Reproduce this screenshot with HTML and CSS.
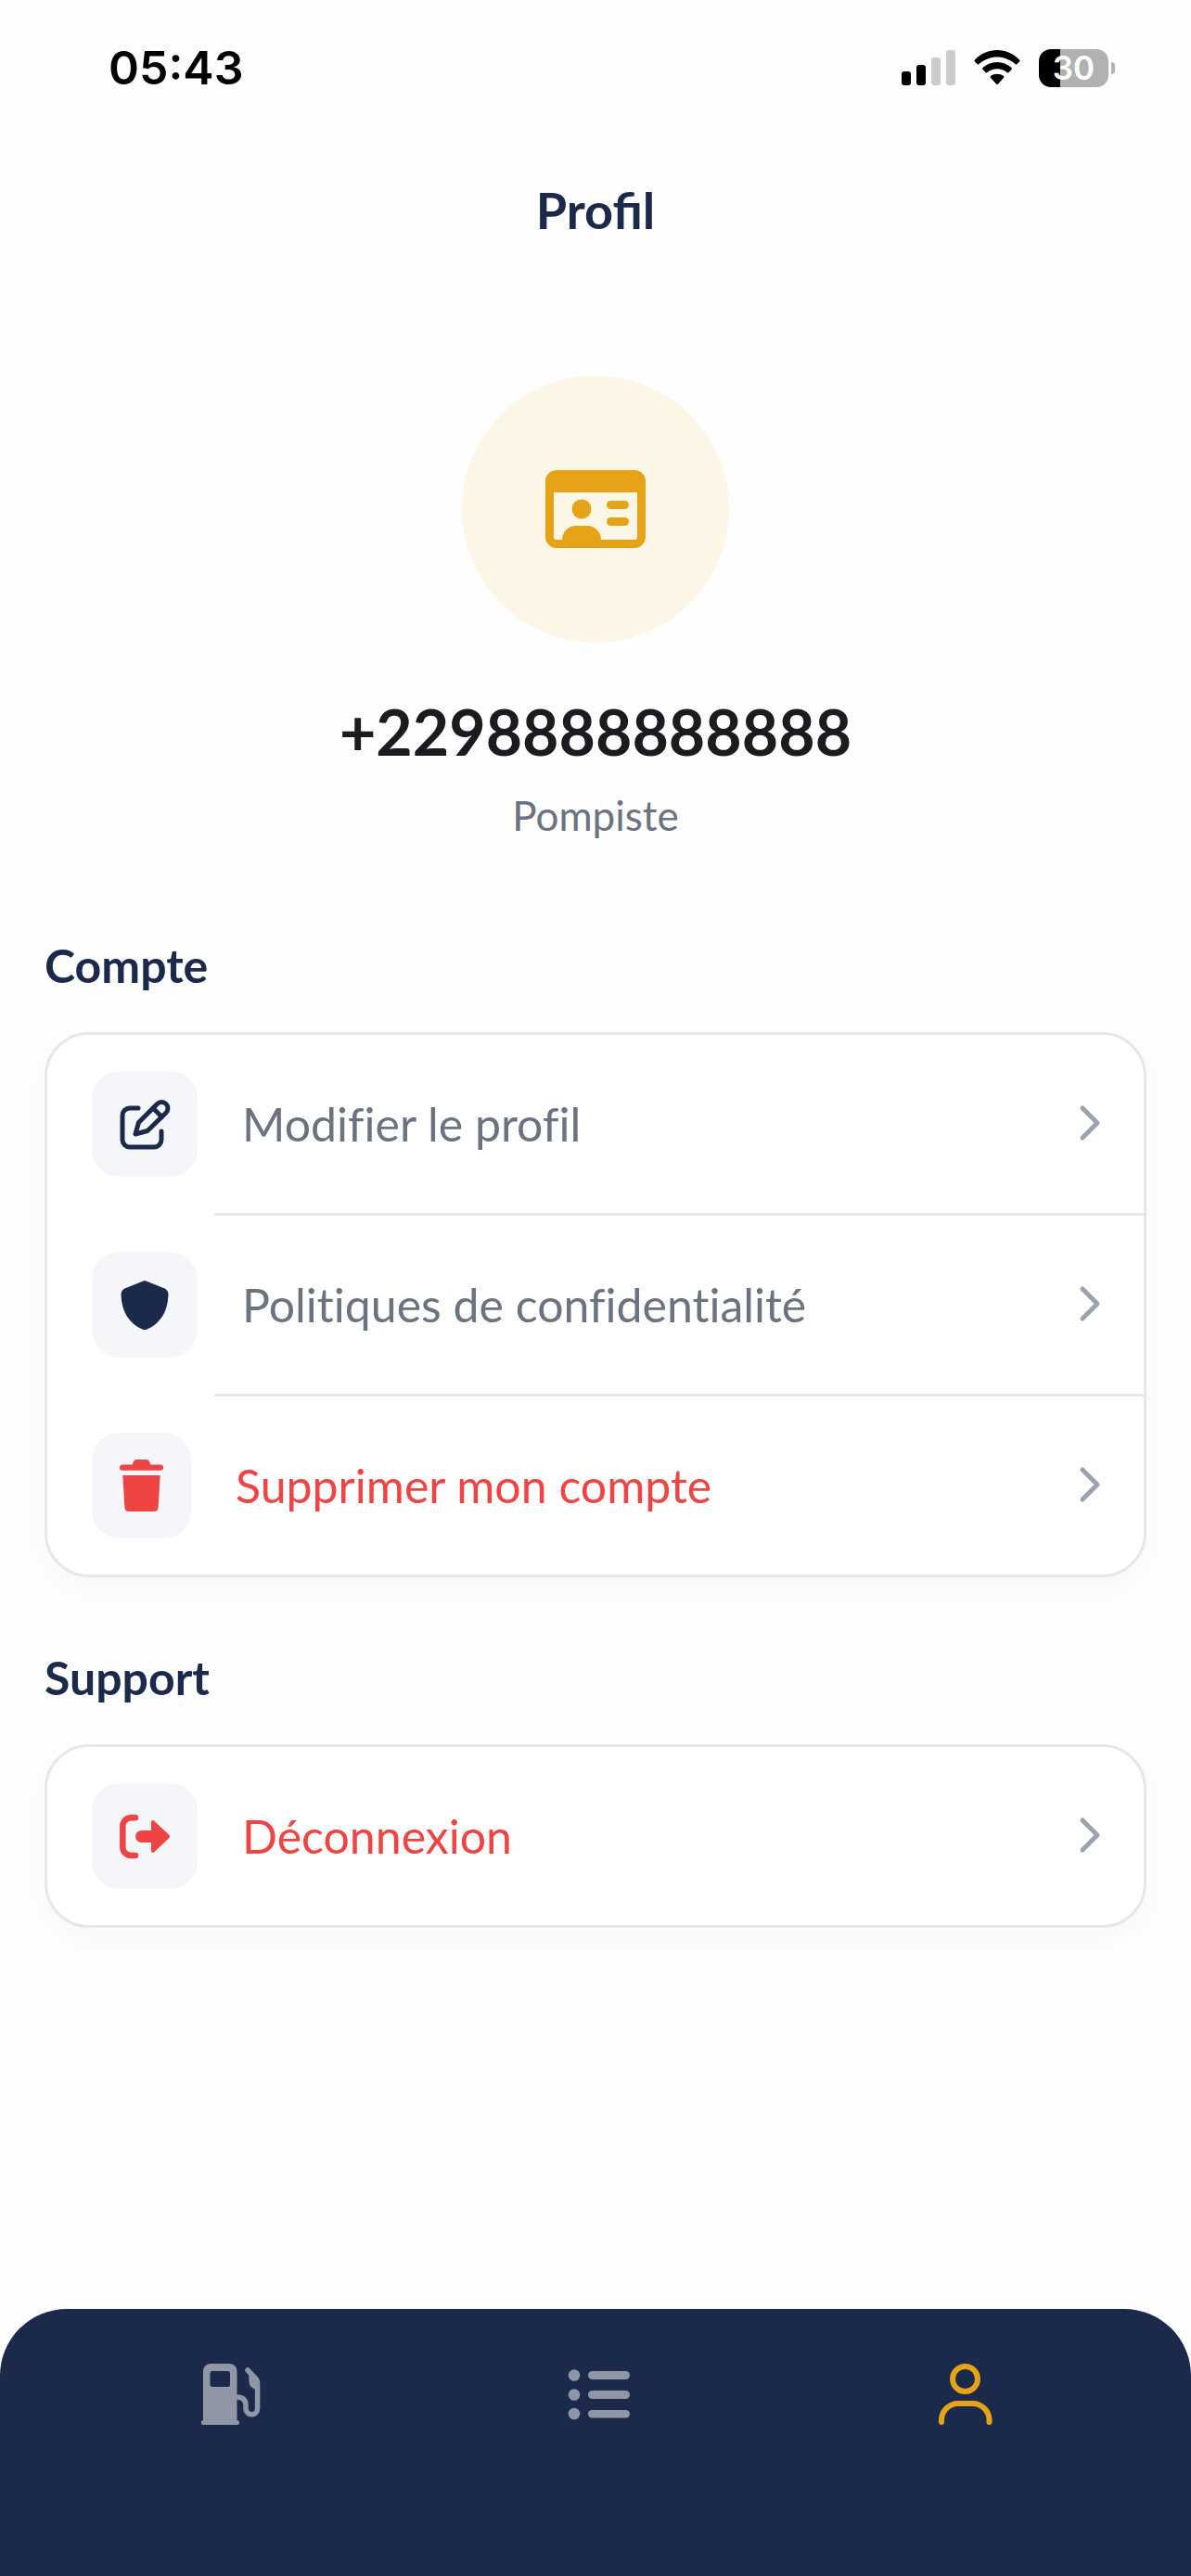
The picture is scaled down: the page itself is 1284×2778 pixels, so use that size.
FILE: index.html
```
<!DOCTYPE html>
<html lang="fr">
<head>
    <meta charset="UTF-8">
    <meta name="viewport" content="width=device-width, initial-scale=1.0">
    <title>Profil</title>
    <link rel="stylesheet" href="styles.css">
</head>
<body>
    <div class="status-bar">
        <span class="time">05:43</span>
        <div class="status-icons">
            <svg width="58" height="38" viewBox="0 0 58 38" aria-hidden="true">
                <rect x="0" y="23" width="10" height="15" rx="3"/>
                <rect x="16" y="16" width="10" height="22" rx="3"/>
                <rect x="32" y="8" width="10" height="30" rx="3" fill="#ccc"/>
                <rect x="48" y="0" width="10" height="38" rx="3" fill="#ccc"/>
            </svg>
            <svg width="50" height="38" viewBox="0 0 50 38" aria-hidden="true">
                <path d="M1 10.5C14-3.5 36-3.5 49 10.5Q50 11.500 49 12.500L46.500 15Q45.500 16 44.500 15C33 5 17 5 5.500 15Q4.500 16 3.500 15L1 12.500Q0 11.500 1 10.500Z"/>
                <path d="M9.500 19C18 11 32 11 40.500 19Q41.500 20 40.500 21L37.500 24Q36.500 25 35.500 24C29.500 19 20.500 19 14.500 24Q13.500 25 12.500 24L9.500 21Q8.500 20 9.500 19Z"/>
                <path d="M18 28C22 25 28 25 32 28Q33 29 32 30L26 36.500Q25 37.500 24 36.500L18 30Q17 29 18 28Z"/>
            </svg>
            <div class="battery"><span>30</span></div>
        </div>
    </div>

    <header class="header">
        <h1>Profil</h1>
    </header>

    <main>
        <section class="profile">
            <div class="avatar">
                <svg width="108" height="84" viewBox="0 0 108 84" aria-hidden="true">
                    <path fill-rule="evenodd" d="M12 0H96A12 12 0 0 1 108 12V72A12 12 0 0 1 96 84H12A12 12 0 0 1 0 72V12A12 12 0 0 1 12 0ZM9 24V72A3 3 0 0 0 12 75H18A15 15 0 0 1 33 60H45A15 15 0 0 1 60 75H96A3 3 0 0 0 99 72V24Z"/>
                    <circle cx="39" cy="42" r="10.500"/>
                    <rect x="66" y="33" width="24" height="9" rx="4.500"/>
                    <rect x="66" y="51" width="24" height="9" rx="4.500"/>
                </svg>
            </div>
            <p class="phone">+2298888888888</p>
            <p class="role">Pompiste</p>
        </section>

        <section class="group">
            <h2>Compte</h2>
            <ul class="card">
                <li>
                    <a href="#modifier" class="row">
                        <span class="icon">
                            <svg width="60" height="60" viewBox="0 0 60 60" fill="none" stroke="currentColor" stroke-width="5" stroke-linecap="round" stroke-linejoin="round" aria-hidden="true">
                                <path d="M23 13H14A8 8 0 0 0 6 21V47A8 8 0 0 0 14 55H40A8 8 0 0 0 48 47V38"/>
                                <path d="M20 41L23.500 28.500L43.500 8.500A6.700 6.700 0 0 1 53 18L33 37.500Z"/>
                                <path d="M39 13L48.500 22.500"/>
                            </svg>
                        </span>
                        <span class="label">Modifier le profil</span>
                        <svg class="chevron" width="24" height="42" viewBox="0 0 24 42" aria-hidden="true"><path d="M4 4L20 20L4 36"/></svg>
                    </a>
                </li>
                <li>
                    <a href="#confidentialite" class="row">
                        <span class="icon">
                            <svg width="60" height="60" viewBox="0 0 60 60" fill="currentColor" aria-hidden="true">
                                <path d="M28.500 4.500Q30 3.500 31.500 4.500L51.500 12.500Q55.500 14.500 55.500 19C55 38 46.500 50.500 32 56.800Q30 57.700 28 56.800C13.500 50.500 5 38 4.500 19Q4.500 14.500 8.500 12.500Z"/>
                            </svg>
                        </span>
                        <span class="label">Politiques de confidentialité</span>
                        <svg class="chevron" width="24" height="42" viewBox="0 0 24 42" aria-hidden="true"><path d="M4 4L20 20L4 36"/></svg>
                    </a>
                </li>
                <li>
                    <button type="button" class="row danger">
                        <span class="icon">
                            <svg width="53" height="60" viewBox="0 0 53 60" fill="currentColor" aria-hidden="true">
                                <path d="M6 7.500H16.500L18 4Q19 2 21 2H32Q34 2 35 4L36.500 7.500H47A3 3 0 0 1 50 10.500A3 3 0 0 1 47 13.700H6A3 3 0 0 1 3 10.500A3 3 0 0 1 6 7.500Z"/>
                                <path d="M6.300 19H46.700L44.600 53.500Q44.300 58 40 58H13Q8.700 58 8.400 53.500Z"/>
                            </svg>
                        </span>
                        <span class="label">Supprimer mon compte</span>
                        <svg class="chevron" width="24" height="42" viewBox="0 0 24 42" aria-hidden="true"><path d="M4 4L20 20L4 36"/></svg>
                    </button>
                </li>
            </ul>
        </section>

        <section class="group">
            <h2>Support</h2>
            <ul class="card">
                <li>
                    <button type="button" class="row danger">
                        <span class="icon">
                            <svg width="60" height="60" viewBox="0 0 60 60" fill="currentColor" aria-hidden="true">
                                <path fill="none" stroke="currentColor" stroke-width="6.500" stroke-linecap="round" d="M20 10.300H15A9 9 0 0 0 6.300 19V42A9 9 0 0 0 15 51H20"/>
                                <path d="M26.500 24H37V15Q37.500 12 40 13.500L56 28.500Q58 30.500 56 32.500L40 47.500Q37.500 49 37 46V37H26.500A6.500 6.500 0 0 1 26.500 24Z"/>
                            </svg>
                        </span>
                        <span class="label">Déconnexion</span>
                        <svg class="chevron" width="24" height="42" viewBox="0 0 24 42" aria-hidden="true"><path d="M4 4L20 20L4 36"/></svg>
                    </button>
                </li>
            </ul>
        </section>
    </main>

    <nav class="tab-bar">
        <a href="#carburant" aria-label="Carburant">
            <svg width="72" height="72" viewBox="0 0 72 72" fill="currentColor" aria-hidden="true">
                <path fill-rule="evenodd" d="M17 3H37.500A8 8 0 0 1 45.500 11V64A2.500 2.500 0 0 1 45.500 69H9.500A2.500 2.500 0 0 1 9 64V11A8 8 0 0 1 17 3ZM19 11A2.500 2.500 0 0 0 16.500 13.500V25.500A2.500 2.500 0 0 0 19 28H35.500A2.500 2.500 0 0 0 38 25.500V13.500A2.500 2.500 0 0 0 35.500 11Z"/>
                <path fill="none" stroke="currentColor" stroke-width="5.500" stroke-linecap="round" stroke-linejoin="round" d="M44 39H46Q55 39.500 55 48V51.500A6.300 6.300 0 0 0 67.600 51.500V24Q67.600 21.500 66 19.500L57 10"/>
                <path d="M58 13L68 22V31.500Q58.500 30 58.500 22Z"/>
            </svg>
        </a>
        <a href="#liste" aria-label="Liste">
            <svg width="72" height="72" viewBox="0 0 72 72" fill="currentColor" aria-hidden="true">
                <circle cx="13" cy="15.500" r="6.300"/>
                <circle cx="13" cy="36.500" r="6.300"/>
                <circle cx="13" cy="57" r="6.300"/>
                <rect x="28" y="11" width="45" height="9" rx="4.500"/>
                <rect x="28" y="32" width="45" height="9" rx="4.500"/>
                <rect x="28" y="53" width="45" height="8.500" rx="4.200"/>
            </svg>
        </a>
        <a href="#profil" class="active" aria-label="Profil">
            <svg width="72" height="72" viewBox="0 0 72 72" fill="none" stroke="currentColor" stroke-width="6" stroke-linecap="round" aria-hidden="true">
                <circle cx="38.500" cy="19.500" r="13.500"/>
                <path d="M13 66V63.500A18 18 0 0 1 32 46H45.500A18 18 0 0 1 64.500 63.500V66"/>
            </svg>
        </a>
    </nav>
</body>
</html>
```
FILE: styles.css
```
* {
    box-sizing: border-box;
}

body {
    margin: 0;
    min-height: 100vh;
    display: flex;
    flex-direction: column;
    font-family: Lato, sans-serif;
    background-color: #fefefe;
    color: #1b2a4a;
}

.status-bar {
    display: flex;
    justify-content: space-between;
    align-items: center;
    height: 146px;
    padding: 0 82px 0 117px;
    color: #000;
}

.time {
    font-family: Inter, sans-serif;
    font-size: 50px;
    font-weight: 600;
}

.status-icons {
    display: flex;
    align-items: center;
    gap: 20px;
}

.battery {
    position: relative;
    width: 75px;
    height: 41px;
    margin-right: 7px;
    border-radius: 13px;
    background: linear-gradient(to right, #000 31%, #b1b1b1 31%);
    color: #fff;
    font-family: Inter, sans-serif;
    font-size: 35px;
    font-weight: 600;
    line-height: 41px;
    text-align: center;
}

.battery::after {
    content: "";
    position: absolute;
    top: 14px;
    right: -7px;
    width: 4px;
    height: 13px;
    border-radius: 0 4px 4px 0;
    background-color: #b1b1b1;
}

.header {
    display: flex;
    justify-content: center;
    align-items: center;
    height: 160px;
}

h1 {
    margin: 0;
    font-size: 54px;
    font-weight: 700;
}

main {
    padding: 99px 48px 48px;
}

.profile {
    display: flex;
    flex-direction: column;
    align-items: center;
    text-align: center;
}

.avatar {
    display: flex;
    justify-content: center;
    align-items: center;
    width: 288px;
    height: 288px;
    border-radius: 50%;
    background-color: #fcf6e6;
    fill: #e7a318;
}

.phone {
    margin: 48px 0 12px;
    font-size: 68px;
    font-weight: 700;
    line-height: 96px;
    color: #1c1b1f;
}

.role {
    margin: 0;
    font-size: 44px;
    line-height: 60px;
    color: #6b7280;
}

.group {
    margin-top: 78px;
}

.profile + .group {
    margin-top: 102px;
}

h2 {
    margin: 0 0 42px;
    font-size: 50px;
    font-weight: 700;
    line-height: 60px;
}

.card {
    margin: 0;
    padding: 0;
    list-style: none;
    border: 3px solid #e5e7eb;
    border-radius: 48px;
    background-color: #fff;
    box-shadow: 0 12px 36px rgba(0, 0, 0, 0.03);
}

/* separator starts after the icon */
.card li + li::before {
    content: "";
    display: block;
    height: 3px;
    margin-left: 180px;
    background-color: #e5e7eb;
}

.row {
    display: flex;
    align-items: center;
    width: 100%;
    padding: 39px 46px 39px 48px;
    border: none;
    background: none;
    color: #6b7280;
    font-family: inherit;
    font-size: 50px;
    font-variant-ligatures: none;
    line-height: 60px;
    text-align: left;
    text-decoration: none;
    cursor: pointer;
}

.icon {
    display: flex;
    padding: 27px;
    border-radius: 30px;
    background-color: #f4f6fa;
    color: #1b2a4a;
}

.label {
    flex: 1;
    margin-left: 48px;
}

.danger,
.danger .icon {
    color: #ef4444;
}

.chevron {
    fill: none;
    stroke: #9ca3af;
    stroke-width: 5;
    stroke-linecap: round;
    stroke-linejoin: round;
}

.tab-bar {
    display: flex;
    justify-content: space-around;
    align-items: flex-start;
    height: 288px;
    margin-top: auto;
    padding: 56px 48px 0;
    border-radius: 72px 72px 0 0;
    background-color: #1b2a4a;
}

.tab-bar a {
    display: flex;
    flex: 1;
    justify-content: center;
    color: #8f96a5;
}

.tab-bar svg {
    overflow: visible;
}

.tab-bar .active {
    color: #e7a318;
}
```
